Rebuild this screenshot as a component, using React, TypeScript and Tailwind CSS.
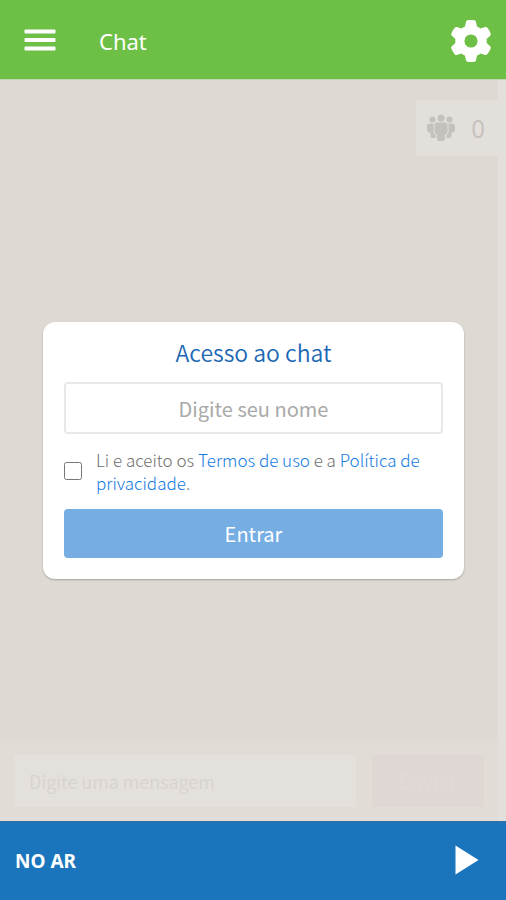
import { useState } from "react";
import { FaGear } from "react-icons/fa6";

const MenuIcon = () => (
    <svg viewBox="0 0 32 24" className="h-6 w-8" fill="currentColor" aria-hidden="true">
        <rect x="0.5" y="0.5" width="31" height="4" rx="1" />
        <rect x="0.5" y="9" width="31" height="4" rx="1" />
        <rect x="0.5" y="17.5" width="31" height="4" rx="1" />
    </svg>
);

const PlayIcon = () => (
    <svg viewBox="0 0 24 30" className="h-[30px] w-6" fill="currentColor" aria-hidden="true">
        <path d="M0.5 0.5v29L23.5 15z" />
    </svg>
);

const PeopleIcon = () => (
    <svg viewBox="0 0 30 30" className="size-[30px]" fill="currentColor" aria-hidden="true">
        <circle cx="15" cy="5" r="3.5" />
        <circle cx="6.5" cy="6.5" r="3" />
        <circle cx="23.5" cy="6.5" r="3" />
        <path d="M11 9.5h8c1.6 0 2.5 1 2.5 2.5v7c0 1.5-1 2-2.5 2v5c0 1.2-.7 2-2 2h-4c-1.300 0-2-.8-2-2v-5c-1.500 0-2.500-.5-2.500-2v-7c0-1.500.9-2.500 2.500-2.500z" />
        <path d="M4 10.500h3.500V19c0 1.500.7 2.400 2.200 2.800V25H6.500C5.300 25 4.500 24.300 4.500 23v-3C2.300 19.500 1 18 1 16.500v-3c0-1.800 1.200-3 3-3z" />
        <path d="M26 10.500h-3.500V19c0 1.500-.7 2.400-2.200 2.800V25h3.200c1.200 0 2-.7 2-2v-3c2.200-.5 3.500-2 3.500-3.500v-3c0-1.800-1.200-3-3-3z" />
    </svg>
);

const Header = () => (
    <header className="flex h-[79px] shrink-0 items-center bg-[#6dbf45] pl-6 pr-[14px] pt-[3px] text-white">
        <button type="button" aria-label="Menu" className="mr-[43px]">
            <MenuIcon />
        </button>
        <h1 className="grow text-[22px]">Chat</h1>
        <button type="button" aria-label="Configurações">
            <FaGear className="size-[42px]" />
        </button>
    </header>
);

const AccessForm = () => {
    const [accepted, setAccepted] = useState(false);

    return (
        <form
            onSubmit={(e) => e.preventDefault()}
            className="w-full rounded-xl bg-white px-[21px] pt-3 pb-[21px] shadow-[0_1px_2px_rgba(0,0,0,0.25)]"
        >
            <h2 className="mb-3 text-center text-[23px] leading-9 font-[350] text-[#1b67b3]">Acesso ao chat</h2>
            <input
                type="text"
                aria-label="Digite seu nome"
                placeholder="Digite seu nome"
                className="block h-[52px] w-full rounded border-2 border-[#e8e8e8] text-center text-xl placeholder:text-[#a9a9a9]"
            />
            <div className="mt-[14px] mb-[15px] flex items-center gap-[14px]">
                <input
                    id="terms"
                    type="checkbox"
                    checked={accepted}
                    onChange={(e) => setAccepted(e.target.checked)}
                    className="size-[18px] shrink-0"
                />
                <label htmlFor="terms" className="text-[17px] leading-[23px] font-light text-[#707070]">
                    Li e aceito os <a href="#termos" className="text-[#147ce2]">Termos de uso</a> e a{" "}
                    <a href="#privacidade" className="text-[#147ce2]">Política de privacidade</a>.
                </label>
            </div>
            <button type="submit" className="block h-[49px] w-full rounded bg-[#76aee4] text-xl text-white">
                Entrar
            </button>
        </form>
    );
};

const MessageBar = () => (
    <div className="flex gap-4 bg-[#e1dcd6] px-[14px] py-[14px]">
        <input
            type="text"
            aria-label="Mensagem"
            placeholder="Digite uma mensagem"
            className="h-[52px] min-w-0 grow bg-[#e4e0dc] px-[15px] text-lg font-[350] placeholder:text-[#d7d3ce]"
        />
        <button type="button" className="h-[52px] w-[112px] shrink-0 bg-[#dfd7d4] text-xl text-[#e1dad5]">
            Enviar
        </button>
    </div>
);

const Player = () => (
    <footer className="flex h-[79px] shrink-0 items-center justify-between border-t-2 border-[#2870ae] bg-[#1b75bc] pl-[15px] pr-[27px] text-white">
        <span className="text-[19px] font-bold">NO AR</span>
        <button type="button" aria-label="Tocar" className="pb-1">
            <PlayIcon />
        </button>
    </footer>
);

export default function App() {
    return (
        <div className="flex min-h-screen flex-col bg-[#ded9d3] font-['Noto_Sans',sans-serif]">
            <Header />
            <main className="flex grow border-t border-[#c5d3b0] font-['Noto_Sans_CJK_SC',sans-serif]">
                <div className="flex min-w-0 grow flex-col justify-between">
                    <div className="mt-5 flex h-14 w-[82px] items-center justify-between self-end rounded-l bg-[#e3dfda] pl-[10px] pr-[13px] text-[#c5c1bc]">
                        <PeopleIcon />
                        <span className="text-[25px] font-[350]">0</span>
                    </div>
                    <div className="pl-[43px] pr-[34px] pt-1">
                        <AccessForm />
                    </div>
                    <MessageBar />
                </div>
                <div className="w-2 shrink-0 bg-[#e3dfdb]" />
            </main>
            <Player />
        </div>
    );
}
